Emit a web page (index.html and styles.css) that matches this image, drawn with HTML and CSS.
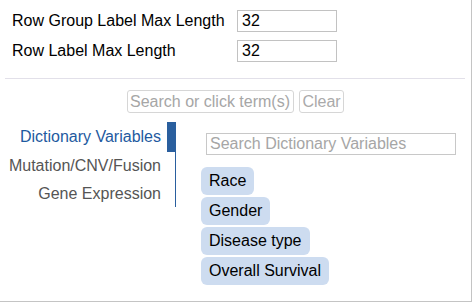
FILE: index.html
```html
<!DOCTYPE html>
<html lang="en">

<head>
  <meta charset="UTF-8">
  <meta name="viewport" content="width=device-width, initial-scale=1.0">
  <title>Matrix settings</title>
  <link rel="stylesheet" href="styles.css">
</head>

<body>
  <div class="panel">
    <div class="settings">
      <label class="settingRow">
        <span>Row Group Label Max Length</span>
        <input type="text" class="numInput" value="32">
      </label>
      <label class="settingRow">
        <span>Row Label Max Length</span>
        <input type="text" class="numInput" value="32">
      </label>
    </div>
    <div class="divider"></div>
    <div class="termSearch">
      <input type="text" class="termInput" placeholder="Search or click term(s)">
      <button class="clearBtn">Clear</button>
    </div>
    <div class="tree">
      <div class="tabs">
        <div class="tab active">Dictionary Variables</div>
        <div class="tab">Mutation/CNV/Fusion</div>
        <div class="tab">Gene Expression</div>
      </div>
      <div class="tabContent">
        <input type="text" class="dictSearch" placeholder="Search Dictionary Variables">
        <div class="termList">
          <div class="term">Race</div>
          <div class="term">Gender</div>
          <div class="term">Disease type</div>
          <div class="term">Overall Survival</div>
        </div>
      </div>
    </div>
  </div>
</body>

</html>
```

FILE: styles.css
```css
html,
body {
  margin: 0;
  background-color: #fff;
  font-family: "Liberation Sans", Arial, sans-serif;
  font-size: 16px;
  color: #000;
}

.panel {
  width: 471px;
  height: 301px;
  border-right: 1px solid #c4c4c4;
  border-bottom: 1px solid #c4c4c4;
  overflow: hidden;
}

.settings {
  padding: 10px 0 0 12px;
  display: flex;
  flex-direction: column;
  gap: 8px;
}

.settingRow {
  display: grid;
  grid-template-columns: 225px 100px;
  align-items: center;
  line-height: 18px;
}

.numInput {
  box-sizing: border-box;
  width: 100px;
  height: 22px;
  padding: 0 4px;
  border: 1px solid #c2c2c2;
  font-family: inherit;
  font-size: 16px;
  color: #000;
  outline: none;
}

.divider {
  height: 1px;
  margin: 16px 6px 0 5px;
  background-color: #e2e0e9;
}

.termSearch {
  display: flex;
  justify-content: center;
  gap: 5px;
  margin-top: 11px;
}

.termInput,
.clearBtn {
  box-sizing: border-box;
  height: 23px;
  border: 1px solid #d6d6d6;
  border-radius: 3px;
  font-family: inherit;
  font-size: 16px;
  background-color: #fff;
  color: #aaa;
}

.termInput {
  width: 167px;
  padding: 0 2px;
}

.termInput::placeholder,
.dictSearch::placeholder {
  color: #a6a6a6;
}

.clearBtn {
  width: 45px;
  padding: 0;
}

.tree {
  display: flex;
  margin-top: 9px;
}

.tabs {
  width: 175px;
  border-right: 1px solid #2a5f9e;
  align-self: flex-start;
}

.tab {
  padding: 5px 14px 5px 0;
  line-height: 18px;
  text-align: right;
  color: #555;
}

.tab:last-child {
  padding-bottom: 4px;
}

.tab.active {
  padding: 6px 14px 6px 0;
  color: #1e5aa0;
  box-shadow: inset -8px 0 0 #2a5f9e;
}

.tabContent {
  padding-top: 11px;
}

.dictSearch {
  box-sizing: border-box;
  display: block;
  width: 250px;
  height: 22px;
  margin-left: 30px;
  padding: 0 3px;
  border: 1px solid #c8c8c8;
  font-family: inherit;
  font-size: 16px;
}

.termList {
  display: flex;
  flex-direction: column;
  align-items: flex-start;
  gap: 2px;
  margin: 12px 0 0 25px;
}

.term {
  padding: 5px 8px;
  line-height: 18px;
  border-radius: 6px;
  background-color: #cddcf0;
  color: #000;
}
```
